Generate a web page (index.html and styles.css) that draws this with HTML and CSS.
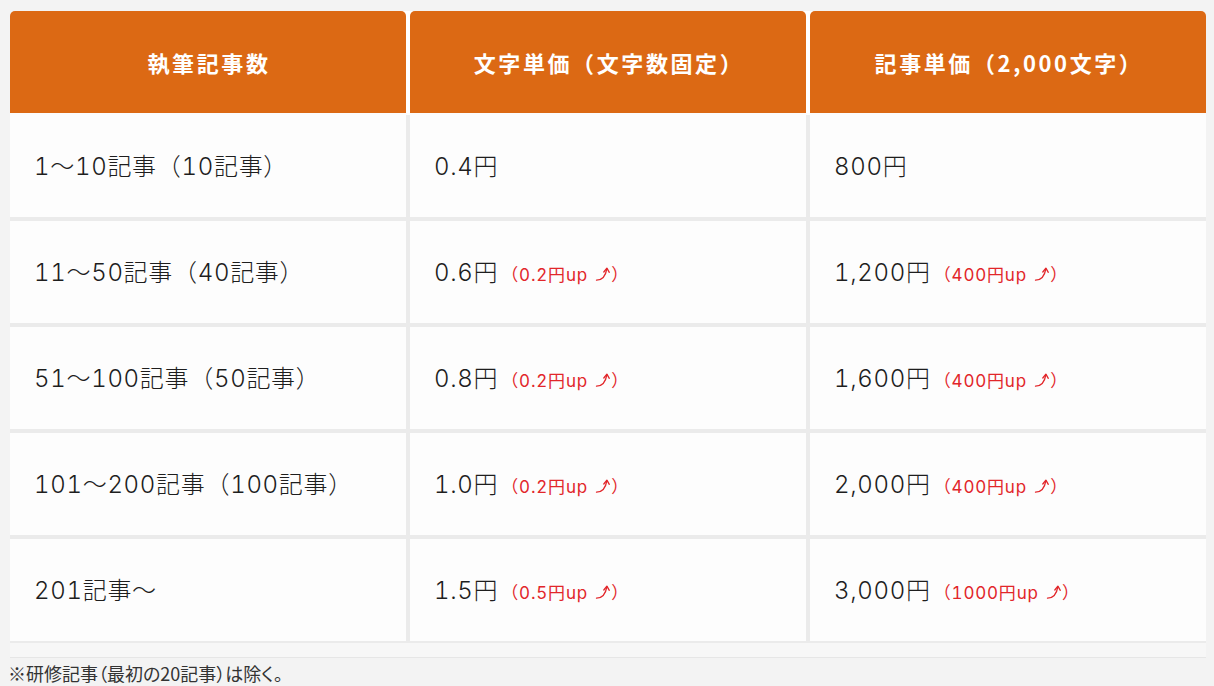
FILE: index.html
```html
<!DOCTYPE html>
<html lang="ja">
<head>
<meta charset="utf-8">
<title>料金表</title>
<link rel="stylesheet" href="styles.css">
</head>
<body>
<div class="page">
  <div class="price-table">
    <div class="head-row">
      <div class="head-cell">執筆記事数</div>
      <div class="head-cell">文字単価（文字数固定）</div>
      <div class="head-cell">記事単価（2,000文字）</div>
    </div>
    <div class="body-grid">
      <div class="cell">1〜10記事（10記事）</div>
      <div class="cell">0.4円</div>
      <div class="cell">800円</div>

      <div class="cell">11〜50記事（40記事）</div>
      <div class="cell">0.6円<span class="up">（0.2円up <svg class="arrow" viewBox="0 0 16 16"><path d="M1.5 14.2 C6.5 14 10.6 10.5 11.8 2.8"/><path d="M8.8 6 L11.9 2.2 L14.3 6.3"/></svg>）</span></div>
      <div class="cell">1,200円<span class="up">（400円up <svg class="arrow" viewBox="0 0 16 16"><path d="M1.5 14.2 C6.5 14 10.6 10.5 11.8 2.8"/><path d="M8.8 6 L11.9 2.2 L14.3 6.3"/></svg>）</span></div>

      <div class="cell">51〜100記事（50記事）</div>
      <div class="cell">0.8円<span class="up">（0.2円up <svg class="arrow" viewBox="0 0 16 16"><path d="M1.5 14.2 C6.5 14 10.6 10.5 11.8 2.8"/><path d="M8.8 6 L11.9 2.2 L14.3 6.3"/></svg>）</span></div>
      <div class="cell">1,600円<span class="up">（400円up <svg class="arrow" viewBox="0 0 16 16"><path d="M1.5 14.2 C6.5 14 10.6 10.5 11.8 2.8"/><path d="M8.8 6 L11.9 2.2 L14.3 6.3"/></svg>）</span></div>

      <div class="cell">101〜200記事（100記事）</div>
      <div class="cell">1.0円<span class="up">（0.2円up <svg class="arrow" viewBox="0 0 16 16"><path d="M1.5 14.2 C6.5 14 10.6 10.5 11.8 2.8"/><path d="M8.8 6 L11.9 2.2 L14.3 6.3"/></svg>）</span></div>
      <div class="cell">2,000円<span class="up">（400円up <svg class="arrow" viewBox="0 0 16 16"><path d="M1.5 14.2 C6.5 14 10.6 10.5 11.8 2.8"/><path d="M8.8 6 L11.9 2.2 L14.3 6.3"/></svg>）</span></div>

      <div class="cell">201記事〜</div>
      <div class="cell">1.5円<span class="up">（0.5円up <svg class="arrow" viewBox="0 0 16 16"><path d="M1.5 14.2 C6.5 14 10.6 10.5 11.8 2.8"/><path d="M8.8 6 L11.9 2.2 L14.3 6.3"/></svg>）</span></div>
      <div class="cell">3,000円<span class="up">（1000円up <svg class="arrow" viewBox="0 0 16 16"><path d="M1.5 14.2 C6.5 14 10.6 10.5 11.8 2.8"/><path d="M8.8 6 L11.9 2.2 L14.3 6.3"/></svg>）</span></div>
    </div>
    <div class="table-foot"></div>
  </div>
  <p class="note">※研修記事（最初の20記事）は除く。</p>
</div>
</body>
</html>
```

FILE: styles.css
```css
html, body {
  margin: 0;
  padding: 0;
  background: #f3f3f3;
}

body {
  font-family: "Inter", "Noto Sans CJK JP", sans-serif;
  font-variant-numeric: tabular-nums;
  color: #222;
}

.page {
  padding: 11px 8px 0 10px;
}

.price-table {
  width: 1196px;
}

.head-row {
  display: grid;
  grid-template-columns: 1fr 1fr 1fr;
  gap: 4px;
  background: #fff;
  border-radius: 5px 5px 0 0;
}

.head-cell {
  height: 102px;
  background: #dc6914;
  border-radius: 5px 5px 0 0;
  color: #fff;
  font-family: "Noto Sans CJK JP", sans-serif;
  font-weight: 700;
  font-size: 22px;
  letter-spacing: 2.6px;
  display: flex;
  align-items: center;
  justify-content: center;
  padding-left: 2px;
}

.body-grid {
  display: grid;
  grid-template-columns: 1fr 1fr 1fr;
  grid-auto-rows: 102px;
  gap: 4px;
  background: #ebebeb;
  border-top: 2px solid #fcfcfc;
  padding-bottom: 2px;
}

.cell {
  background: #fdfdfd;
  display: flex;
  align-items: baseline;
  align-content: center;
  flex-wrap: wrap;
  padding: 0 0 4px 24px;
  font-size: 24px;
  font-weight: 300;
  letter-spacing: 0.7px;
  color: #1e1e1e;
}

.up {
  font-size: 17px;
  font-weight: 400;
  letter-spacing: 0.8px;
  color: #e2262a;
  margin-left: 3px;
}

.arrow {
  width: 16px;
  height: 16px;
  margin-left: 2px;
  fill: none;
  stroke: #e2262a;
  stroke-width: 1.3;
  stroke-linecap: round;
  stroke-linejoin: round;
  vertical-align: -1px;
}

.table-foot {
  height: 14px;
  background: #f7f7f7;
  border-bottom: 1px solid #e6e6e6;
}

.note {
  margin: 0 0 0 -2px;
  padding-top: 1px;
  font-family: "Noto Sans CJK JP", sans-serif;
  font-feature-settings: "palt";
  font-size: 18px;
  line-height: 28px;
  color: #333;
}
```
